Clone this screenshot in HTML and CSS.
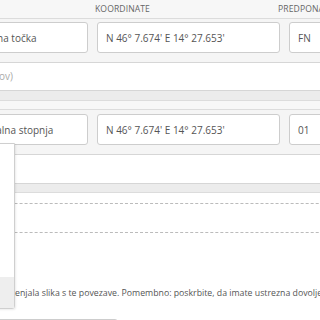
FILE: index.html
```html
<!DOCTYPE html>
<html lang="sl">
<head>
  <meta charset="UTF-8" />
  <title>Dodatne točke</title>
  <link rel="stylesheet" href="styles.css">
</head>
<body>

  <div class="sheet">
    <!-- Column labels -->
    <div class="cols head">
      <span></span>
      <span class="label">Vrsta</span>
      <span class="label label-coords">Koordinate</span>
      <span class="label label-prefix">Predpona</span>
    </div>

    <!-- Waypoint 1 -->
    <div class="wp">
      <div class="cols">
        <span class="num">1</span>
        <input class="field" type="text" value="Končna točka" />
        <input class="field" type="text" value="N 46° 7.674' E 14° 27.653'" />
        <input class="field" type="text" value="FN" />
      </div>
      <textarea class="note" placeholder="Opis stopnje (brez namigov)"></textarea>
      <div class="strip"></div>
    </div>

    <!-- Waypoint 2 -->
    <div class="wp">
      <div class="cols">
        <span class="num">2</span>
        <input class="field" type="text" value="Virtualna stopnja" />
        <input class="field" type="text" value="N 46° 7.674' E 14° 27.653'" />
        <input class="field" type="text" value="01" />
      </div>
      <textarea class="note"></textarea>
      <div class="strip"></div>
    </div>

    <!-- Image of the stage -->
    <div class="media">
      <div class="drop"></div>
      <p class="hint">Po shranjevanju bo to sliko zamenjala slika s te povezave. Pomembno: poskrbite, da imate ustrezna dovoljenja.</p>
      <input class="field url" type="text" />
    </div>
  </div>

  <!-- Side menu lying over the list -->
  <div class="side">
    <div class="side-foot"></div>
  </div>

</body>
</html>
```

FILE: styles.css
```css
body {
  margin: 0;
  width: 320px;
  height: 320px;
  overflow: hidden;
  position: relative;
  background: #f7f7f7;
  font-family: "Open Sans", sans-serif;
  color: #555;
}
.sheet {
  margin-left: -126px;
  width: 520px;
}
.cols {
  display: grid;
  grid-template-columns: 82px 123px 183px 120px;
  column-gap: 9px;
}
.head {
  height: 18px;
  align-items: center;
}
.label {
  font-size: 8.6px;
  text-transform: uppercase;
  color: #666;
  letter-spacing: 0.1px;
}
.label-coords {
  margin-left: -2px;
}
.label-prefix {
  margin-left: -11px;
}
.num {
  visibility: hidden;
}
.wp {
  border-top: 1px solid #dcdcdc;
  border-bottom: 1px solid #dcdcdc;
  padding-top: 3px;
  background: #f5f5f5;
}
.wp + .wp {
  margin-top: 8px;
  padding-top: 4px;
}
.field {
  display: block;
  height: 31px;
  box-sizing: border-box;
  margin: 0;
  border: 1px solid #cdcdcd;
  border-radius: 3px;
  background: #fff;
  padding: 0 8px;
  font-family: "Open Sans", sans-serif;
  font-size: 10px;
  color: #555;
  outline: none;
}
.note {
  display: block;
  width: 100%;
  height: 29px;
  box-sizing: border-box;
  margin: 9px 0 0;
  border: none;
  border-top: 1px solid #d6d6d6;
  border-bottom: 1px solid #d6d6d6;
  padding: 7px 9px;
  resize: none;
  overflow: hidden;
  background: #fff;
  font-family: "Open Sans", sans-serif;
  font-size: 10px;
  line-height: 12px;
}
.note::placeholder {
  color: #aaa;
}
.strip {
  height: 9px;
  background: #ececec;
}
.wp + .wp .note {
  height: 30px;
}
.wp + .wp .strip {
  height: 8px;
}
.media {
  background: #fff;
  padding-top: 10px;
  height: 200px;
}
.drop {
  height: 28px;
  border-top: 1px dashed #bbb;
  border-bottom: 1px dashed #bbb;
}
.hint {
  margin: 54px 0 0;
  padding-left: 12px;
  font-size: 8.75px;
  line-height: 12px;
  white-space: nowrap;
  color: #555;
}
.url {
  margin: 20px 0 0 9px;
  width: 235px;
}
.side {
  position: absolute;
  left: -10px;
  top: 143px;
  width: 23px;
  height: 164px;
  border: 1px solid #cfcfcf;
  border-radius: 0 0 3px 0;
  background: #fff;
  display: flex;
  flex-direction: column;
  justify-content: flex-end;
  box-shadow: 1px 1px 2px rgba(0, 0, 0, 0.08);
}
.side-foot {
  height: 31px;
  background: #eeeeee;
}
```
